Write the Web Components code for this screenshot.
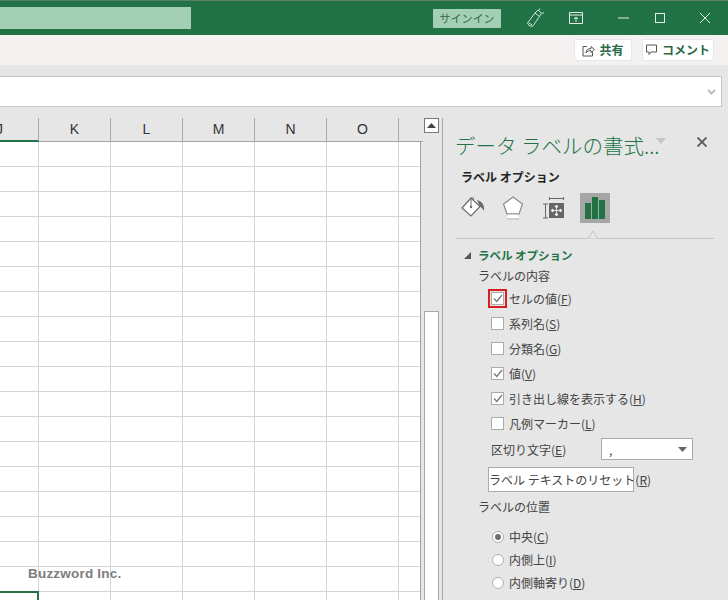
<!DOCTYPE html>
<html lang="ja"><head><meta charset="utf-8">
<style>
html,body{margin:0;padding:0;height:600px;width:728px;overflow:hidden;background:#e6e6e6;font-family:"Noto Sans CJK JP","Liberation Sans",sans-serif}
</style></head><body>
<xl-app></xl-app>
<script>
const FONT='"Noto Sans CJK JP","Liberation Sans",sans-serif';
function el(name,html,css){
  customElements.define(name,class extends HTMLElement{
    connectedCallback(){
      if(this.shadowRoot)return;
      const r=this.attachShadow({mode:'open'});
      r.innerHTML='<style>'+css+'</style>'+(typeof html==='function'?html(this):html);
    }
  });
}
el('xl-titlebar',`
 <div class="search"></div><div class="sp"></div>
 <div class="sign">サインイン</div>
 <svg class="i" style="margin-left:23px" width="22" height="22" viewBox="0 0 22 22" fill="none" stroke="#cfe3d7" stroke-width="1"><path d="M5 18.5 3.5 16 11 6l4.500 3.500L8.500 19.500z"/><path d="M11 6l3-3 3.500 3-2 3.500M15 3l1-1.500M18 6h2M5 16l3 2"/></svg>
 <svg class="i" style="margin-left:23px" width="14" height="14" viewBox="0 0 14 14" fill="none" stroke="#e4efe8" stroke-width="1"><path d="M.5 1.500h13v11H.5zM.5 4h13M7 11V6M5 8l2-2 2 2"/></svg>
 <svg class="i" style="margin-left:35px" width="11" height="2" viewBox="0 0 11 2"><path d="M0 1h11" stroke="#e4efe8"/></svg>
 <svg class="i" style="margin-left:26px" width="10" height="10" viewBox="0 0 10 10" fill="none"><rect x=".5" y=".5" width="9" height="9" stroke="#e4efe8"/></svg>
 <svg class="i" style="margin-left:35px;margin-right:18px" width="10" height="10" viewBox="0 0 10 10"><path d="M0 0l10 10M10 0 0 10" stroke="#e4efe8"/></svg>
`,`:host{display:flex;align-items:center;height:35px;background:#217346;box-sizing:border-box;border-top:1px solid #5a7f68;flex:none}
.search{width:191px;height:22px;background:#a3cfb5;margin-top:-1px}
.sp{flex:1}
.sign{width:68px;height:19px;background:#a3cfb5;border-radius:1px;color:#38684c;font:11px/19px ${FONT};text-align:center;margin-right:0;margin-top:0}
.i{flex:none;display:block}`);

el('xl-ribbon',`
 <div class="sp"></div>
 <div class="b" style="width:58px"><svg width="13" height="13" viewBox="0 0 13 13" fill="none" stroke="#555" stroke-width="1"><path d="M5 2.500H1v9.500h9.500V8M4 9c0-3 2-4.500 5-4.500V2.500l3.500 3L9 8.500v-2C7 6.500 5 7 4 9z"/></svg><span>共有</span></div>
 <div class="b" style="width:72px;margin-left:10px"><svg width="12" height="12" viewBox="0 0 12 12" fill="none" stroke="#555" stroke-width="1"><path d="M.5 1h10v7H5l-2 2.500V8H.5z"/></svg><span>コメント</span></div>
`,`:host{display:flex;height:30px;background:#f3f2f1;align-items:flex-start;padding:4px 14px 0 0;box-sizing:border-box;flex:none}
.sp{flex:1}
.b{height:22px;background:#fff;box-sizing:border-box;border:1px solid #e8e7e6;border-radius:2px;display:flex;align-items:center;justify-content:center;gap:4px;font:bold 12px/20px ${FONT};color:#217346}
span{color:#2c6a4c}`);

el('xl-formula',`<svg width="9" height="6" viewBox="0 0 9 6" fill="none"><path d="M1 1l3.500 3.500L8 1" stroke="#bdbdbd" stroke-width="2"/></svg>`,
`:host{display:flex;align-items:center;justify-content:flex-end;height:31px;background:#fff;border-top:1px solid #c6c6c6;border-bottom:1px solid #c6c6c6;border-right:1px solid #c6c6c6;box-sizing:border-box;margin:11px 6px 0 0;padding-right:5px;flex:none}`);

const cols=[['J',39],['K',72],['L',72],['M',72],['N',72],['O',72]];
el('xl-headers',cols.map(([c,w])=>`<div class="h ${c==='J'?'sel':''}" style="width:${w}px">${c==='J'?'<span style="margin-left:-4px">J</span>':c}</div>`).join('')+'<div class="h end"></div>',
`:host{display:flex;height:24px;background:#e6e6e6;box-sizing:border-box;flex:none}
.h{box-sizing:border-box;height:24px;border-bottom:1px solid #a3a3a3;border-right:1px solid #a8a8a8;font:14px/22px "Liberation Sans",sans-serif;color:#333;text-align:center;flex:none;position:relative}
.h.sel{border-bottom:2px solid #217346;text-align:left}
.h.end{width:24px;border-right:0;flex:none;margin-right:0}`);

el('xl-grid',`<div class="sel"></div><div class="mark">Buzzword Inc.</div>`,
`:host{display:block;position:relative;width:421px;flex:1;box-sizing:border-box;overflow:hidden;border-right:1px solid #a3a3a3;background-color:#fff;
 background-image:linear-gradient(#d4d4d4,#d4d4d4),repeating-linear-gradient(to bottom,transparent 0,transparent 24px,#d4d4d4 24px,#d4d4d4 25px),repeating-linear-gradient(to right,transparent 0,transparent 71px,#d4d4d4 71px,#d4d4d4 72px);
 background-size:1px 100%,100% 100%,100% 100%;background-position:38px 0,0 0,39px 0;background-repeat:no-repeat,no-repeat,no-repeat}
.sel{position:absolute;left:-3px;top:449px;width:42px;height:40px;border:2px solid #217346;box-sizing:border-box}
.mark{position:absolute;left:28px;top:423px;font:bold 13.500px/18px "Liberation Sans",sans-serif;color:#7d7d7d;letter-spacing:.2px;white-space:nowrap}`);

el('xl-scroll',`<div class="btn"><svg width="9" height="5" viewBox="0 0 9 5"><path d="M4.500 0 9 5H0z" fill="#444"/></svg></div><div class="thumb"></div>`,
`:host{display:block;width:15px;background:#e2e2e2;position:relative;flex:none;box-sizing:border-box;background:#e6e6e6}
.btn{width:15px;height:15px;box-sizing:border-box;border:1px solid #777;background:#fff;display:flex;align-items:center;justify-content:center}
.thumb{position:absolute;left:0;top:193px;width:15px;height:300px;background:#fff;border:1px solid #a8a8a8;box-sizing:border-box}`);

el('xl-check',t=>{
  const c=t.hasAttribute('checked');
  const h=t.hasAttribute('hl');
  const [a,...rest]=t.getAttribute('label').split('|');
  return `<span class="bx ${h?'hl':''}">${c?'<svg width="10" height="9" viewBox="0 0 10 9" fill="none"><path d="M1 4.500l2.800 3L9 1" stroke="#777" stroke-width="1.300"/></svg>':''}</span><span class="t">${a}(<u>${rest[0]}</u>)</span>`;
},`:host{display:flex;align-items:center;height:25px;margin-left:48px;font:12px/25px ${FONT};color:#444;white-space:nowrap}
.bx{width:13px;height:13px;border:1px solid #ababab;background:#fff;box-sizing:border-box;display:flex;align-items:center;justify-content:center;margin-right:5px;position:relative;flex:none;width:13px}
.hl{outline:2px solid #d81e1e;outline-offset:1px}
u{text-decoration-thickness:1px}`);

el('xl-radio',t=>{
  const c=t.hasAttribute('checked');
  const [a,b]=t.getAttribute('label').split('|');
  return `<span class="r">${c?'<i></i>':''}</span><span>${a}(<u>${b}</u>)</span>`;
},`:host{display:flex;align-items:center;height:23px;margin-left:49px;font:12px/23px ${FONT};color:#444;white-space:nowrap}
.r{width:12px;height:12px;border:1px solid #b0b0b0;border-radius:50%;background:#fff;box-sizing:border-box;margin-right:5px;display:flex;align-items:center;justify-content:center;flex:none}
i{width:6px;height:6px;border-radius:50%;background:#6e6e6e;display:block}
u{text-decoration-thickness:1px}`);

el('xl-pane',`
 <div class="head"><span class="ttl">データ ラベルの書式...</span>
  <svg class="drop" width="10" height="6" viewBox="0 0 10 6"><path d="M0 0h10L5 6z" fill="#c6c6c6"/></svg>
  <svg class="close" width="10" height="10" viewBox="0 0 10 10"><path d="M.5.500l9 9M9.500.500l-9 9" stroke="#5a5a5a" stroke-width="1.800"/></svg></div>
 <div class="sub">ラベル オプション</div>
 <div class="tabs">
  <svg style="margin-left:18px" width="26" height="26" viewBox="0 0 26 26" fill="none"><path d="M10 3 1 13l9 8 9-9.500z" fill="#fff" stroke="#6a6a6a" stroke-width="1.200"/><path d="M10 12V4c0-2 2.500-2 2.500 0v2" stroke="#6a6a6a"/><circle cx="10" cy="12" r="1.200" fill="#6a6a6a"/><path d="M16 5c4 1 8 4 7 11-1-2-3-4-4-4.500z" fill="#6a6a6a"/></svg>
  <svg style="margin-left:15px" width="22" height="26" viewBox="0 0 22 26" fill="none" stroke="#8a8a8a" stroke-width="1.200"><path d="M11 2l9.500 7-3.500 10H5L1.500 9z" fill="#fff"/><path d="M5.500 19h11M5 23.500h12" stroke-width="1.500" stroke="#9a9a9a"/><path d="M6 19.500 5 23.500h12l-1-4z" fill="#fff" stroke="none"/></svg>
  <svg style="margin-left:18px" width="24" height="24" viewBox="0 0 24 24" fill="none"><path d="M7.500 1v3M21.500 1v3M7.500 2.500h14" stroke="#666"/><path d="M1 8h5M1 22h5M3.500 8v14" stroke="#666"/><rect x="7" y="7" width="15" height="15" fill="#666"/><path d="M14.500 9.500v10M9.500 14.500h10M14.500 9l-1.500 2h3zM14.500 20l-1.500-2h3zM9 14.500l2-1.500v3zM20 14.500l-2-1.500v3z" stroke="#fff" stroke-width=".8" fill="#fff"/></svg>
  <div class="on"><svg width="20" height="22" viewBox="0 0 20 22"><rect x="0" y="6" width="6" height="16" fill="#217346"/><rect x="7" y="0" width="6" height="22" fill="#217346"/><rect x="14" y="3" width="6" height="19" fill="#217346"/></svg></div>
 </div>
 <div class="rule"><svg class="notch" width="16" height="9" viewBox="0 0 16 9"><path d="M0 8.500h3L8 1l5 7.500h3" fill="#e6e6e6" stroke="#c4c4c4"/></svg></div>
 <div class="sec"><svg width="7" height="7" viewBox="0 0 7 7"><path d="M7 0v7H0z" fill="#555"/></svg><span>ラベル オプション</span></div>
 <div class="lbl">ラベルの内容</div>
 <xl-check checked hl label="セルの値|F"></xl-check>
 <xl-check label="系列名|S"></xl-check>
 <xl-check label="分類名|G"></xl-check>
 <xl-check checked label="値|V"></xl-check>
 <xl-check checked label="引き出し線を表示する|H"></xl-check>
 <xl-check label="凡例マーカー|L"></xl-check>
 <div class="sepr"><span>区切り文字(<u>E</u>)</span><div class="sel"><span>,</span><svg width="9" height="5" viewBox="0 0 9 5"><path d="M0 0h9L4.500 5z" fill="#666"/></svg></div></div>
 <div class="reset">ラベル テキストのリセット(<u>R</u>)</div>
 <div class="lbl pos">ラベルの位置</div>
 <xl-radio checked label="中央|C"></xl-radio>
 <xl-radio label="内側上|I"></xl-radio>
 <xl-radio label="内側軸寄り|D"></xl-radio>
`,`:host{display:block;flex:1;border-left:1px solid #a9a9a9;box-sizing:border-box;background:#e6e6e6;overflow:hidden;color:#444;font-family:${FONT};height:100%}
.head{display:flex;align-items:center;height:40px;margin-top:7px;position:relative}
.ttl{font:20.500px/30px ${FONT};color:#217346;margin-left:12px;white-space:nowrap;font-weight:300}
.drop{position:absolute;left:213px;top:13px}
.close{position:absolute;left:254px;top:12px}
.sub{font:bold 12px/18px ${FONT};color:#222;margin:0 0 0 18px;height:18px;margin-top:3px}
.tabs{display:flex;align-items:center;height:30px;margin-top:7px}
.on{width:30px;height:30px;background:#a6a6a6;margin-left:14px;display:flex;align-items:center;justify-content:center}
.rule{height:1px;background:#c4c4c4;margin:15px 14px 0 13px;position:relative}
.notch{position:absolute;left:129px;top:-8px}
.sec{display:flex;align-items:center;height:20px;margin-top:6px;margin-left:21px;gap:7px;font:bold 11.500px/20px ${FONT};color:#217346}
.lbl{font:12px/20px ${FONT};margin-left:35px;height:20px;color:#444;margin-top:1px}
.sepr{display:flex;align-items:center;height:24px;margin:1px 0 0 48px;font-size:12px}
.sel{width:92px;height:22px;box-sizing:border-box;border:1px solid #ababab;background:#fff;margin-left:auto;margin-right:35px;display:flex;align-items:center;justify-content:space-between;padding:0 5px 0 7px}
.reset{width:146px;height:25px;box-sizing:border-box;border:1px solid #ababab;background:#fff;font:12px/23px ${FONT};text-align:center;margin:6px 0 0 45px;white-space:nowrap}
.pos{margin-top:5px}
xl-radio:first-of-type{margin-top:8px}`);

el('xl-app',`
 <xl-titlebar></xl-titlebar><xl-ribbon></xl-ribbon>
 <xl-formula></xl-formula>
 <div class="main">
  <div class="left"><xl-headers></xl-headers><xl-grid></xl-grid></div>
  <div class="sb"><xl-scroll></xl-scroll></div>
  <xl-pane></xl-pane>
 </div>`,
`:host{display:flex;flex-direction:column;width:728px;height:600px;background:#e6e6e6;overflow:hidden}
.main{display:flex;flex:1;min-height:0;margin-top:11px}
.left{width:421px;display:flex;flex-direction:column;flex:none}
.sb{width:21px;flex:none;display:flex;padding:0 0 0 3px;box-sizing:border-box}`);
</script>
</body></html>
